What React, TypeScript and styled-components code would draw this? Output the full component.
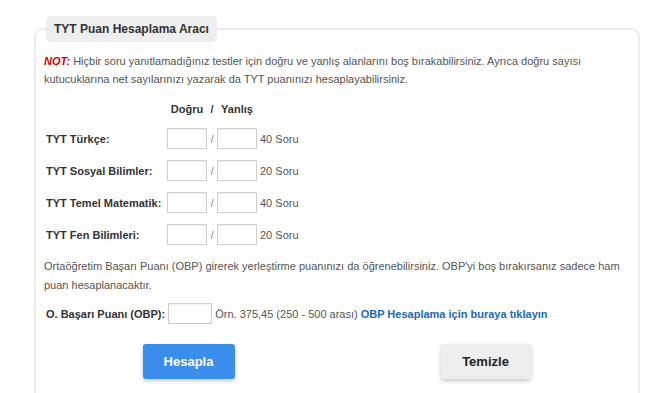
import { Fragment } from "react";
import styled, { createGlobalStyle } from "styled-components";

const GlobalStyle = createGlobalStyle`
  body {
    margin: 0;
    background: #fff;
    font-family: "Liberation Sans", Arial, sans-serif;
    color: #555;
  }
`;

const Page = styled.div`
  padding: 16px 0 0 34px;
  height: 393px;
  box-sizing: border-box;
  overflow: hidden;
`;

const Box = styled.fieldset`
  margin: 0;
  width: 606px;
  box-sizing: border-box;
  border: 2px solid #ececec;
  border-radius: 9px;
  padding: 0 9px 40px 8px;
  min-height: 420px;
`;

const Title = styled.legend`
  margin-left: 2px;
  padding: 6px 8px;
  background: #eeeeee;
  border-radius: 5px;
  font-size: 12px;
  line-height: 14px;
  font-weight: 700;
  color: #333;
`;

const Note = styled.p<{ $gap?: number; $lh?: number }>`
  margin: ${(p) => p.$gap ?? 10}px 0 0;
  font-size: 11px;
  line-height: ${(p) => p.$lh ?? 18}px;
  color: #555;
`;

const NoteTag = styled.strong`
  color: #d40000;
  font-style: italic;
`;

const Grid = styled.div`
  display: grid;
  grid-template-columns: 121px 40px 10px 40px auto;
  grid-template-rows: 16px;
  grid-auto-rows: 21px;
  row-gap: 11px;
  align-items: center;
  margin: 13px 0 0 2px;
  font-size: 11px;
`;

const HeadCell = styled.span`
  font-weight: 700;
  color: #333;
  text-align: center;
`;

const Label = styled.label`
  font-weight: 700;
  color: #333;
  white-space: nowrap;
`;

const Slash = styled.span`
  text-align: center;
  color: #888;
`;

const Count = styled.span`
  padding-left: 3px;
  color: #555;
`;

const Field = styled.input<{ $w?: number }>`
  width: ${(p) => p.$w ?? 40}px;
  height: 21px;
  box-sizing: border-box;
  margin: 0;
  border: 1px solid #cfcfcf;
  border-radius: 0;
  box-shadow: inset 0 1px 2px rgba(0, 0, 0, 0.08);
  font: inherit;
  outline: none;
`;

const ObpRow = styled.div`
  display: flex;
  align-items: center;
  gap: 3px;
  margin: 8px 0 0 2px;
  font-size: 11px;
`;

const Link = styled.a`
  color: #1a68b8;
  font-weight: 700;
  text-decoration: none;
`;

const Actions = styled.div`
  display: flex;
  justify-content: center;
  gap: 206px;
  margin-top: 20px;
`;

const Button = styled.button<{ $primary?: boolean }>`
  height: 35px;
  width: ${(p) => (p.$primary ? 92 : 90)}px;
  border: none;
  border-radius: 3px;
  font-family: "Liberation Sans", Arial, sans-serif;
  font-size: 13px;
  font-weight: 700;
  cursor: pointer;
  background: ${(p) => (p.$primary ? "#3b8deb" : "#eeeeee")};
  color: ${(p) => (p.$primary ? "#fff" : "#222")};
  box-shadow: 0 2px 4px rgba(0, 0, 0, 0.22);
`;

const lessons = [
  { name: "TYT Türkçe:", count: 40 },
  { name: "TYT Sosyal Bilimler:", count: 20 },
  { name: "TYT Temel Matematik:", count: 40 },
  { name: "TYT Fen Bilimleri:", count: 20 },
];

const App = () => {
  return (
    <Page>
      <GlobalStyle />
      <Box>
        <Title>TYT Puan Hesaplama Aracı</Title>
        <Note>
          <NoteTag>NOT:</NoteTag> Hiçbir soru yanıtlamadığınız testler için
          doğru ve yanlış alanlarını boş bırakabilirsiniz. Ayrıca doğru sayısı
          kutucuklarına net sayılarınızı yazarak da TYT puanınızı
          hesaplayabilirsiniz.
        </Note>
        <Grid>
          <span />
          <HeadCell>Doğru</HeadCell>
          <HeadCell>/</HeadCell>
          <HeadCell>Yanlış</HeadCell>
          <span />
          {lessons.map((l) => (
            <Fragment key={l.name}>
              <Label>{l.name}</Label>
              <Field type="text" />
              <Slash>/</Slash>
              <Field type="text" />
              <Count>{l.count} Soru</Count>
            </Fragment>
          ))}
        </Grid>
        <Note $gap={12} $lh={19}>
          Ortaöğretim Başarı Puanı (OBP) girerek yerleştirme puanınızı da
          öğrenebilirsiniz. OBP'yi boş bırakırsanız sadece ham puan
          hesaplanacaktır.
        </Note>
        <ObpRow>
          <Label>O. Başarı Puanı (OBP):</Label>
          <Field type="text" $w={44} />
          <span>Örn. 375,45 (250 - 500 arası)</span>
          <Link href="#">OBP Hesaplama için buraya tıklayın</Link>
        </ObpRow>
        <Actions>
          <Button $primary>Hesapla</Button>
          <Button>Temizle</Button>
        </Actions>
      </Box>
    </Page>
  );
};

export default App;
